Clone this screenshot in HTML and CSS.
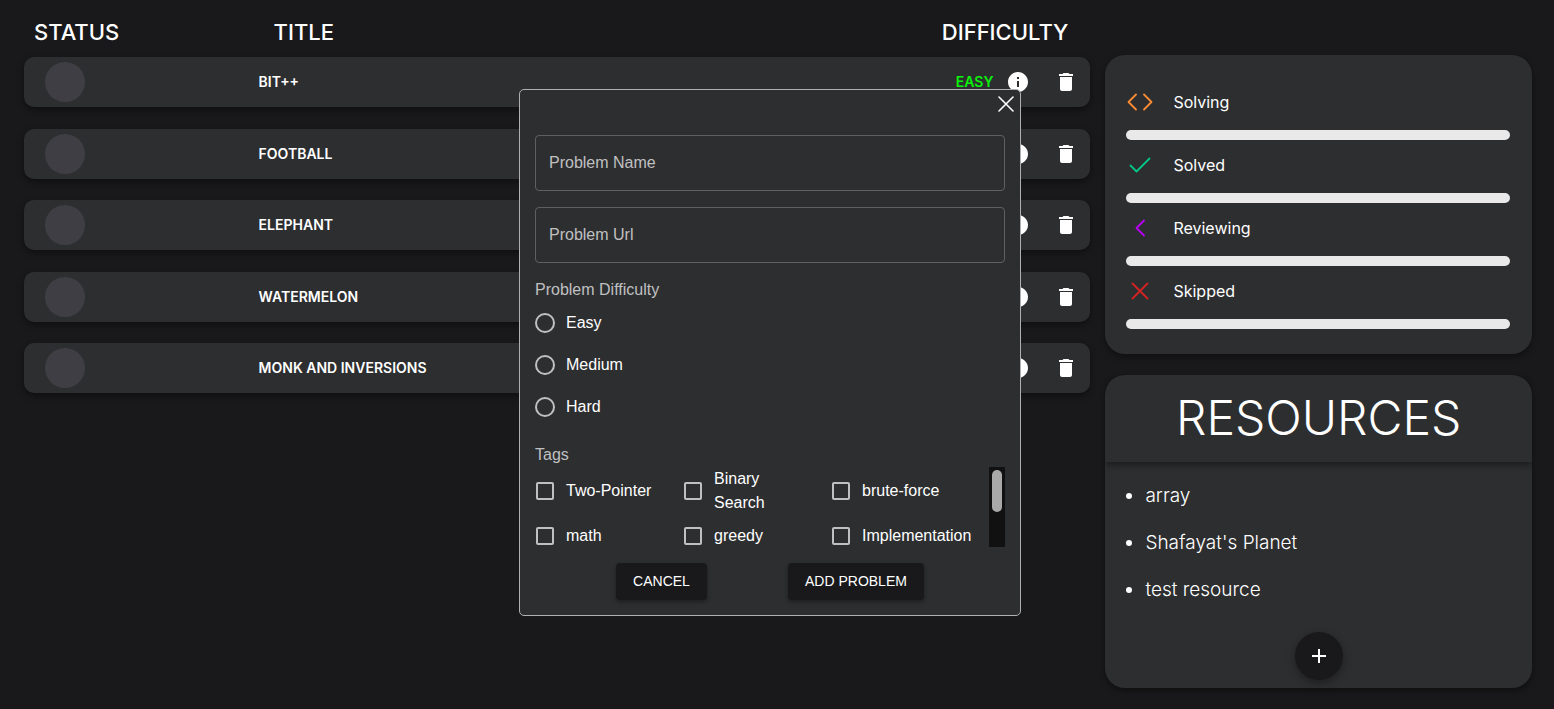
FILE: index.html
```html
<!DOCTYPE html>
<html lang="en">
<head>
<meta charset="utf-8">
<meta name="viewport" content="width=device-width, initial-scale=1">
<title>Problem Tracker</title>
<link rel="stylesheet" href="styles.css">
</head>
<body>
<svg class="sprite" aria-hidden="true">
  <symbol id="info" viewBox="0 0 24 24"><path d="M12 2C6.480 2 2 6.480 2 12s4.480 10 10 10 10-4.480 10-10S17.520 2 12 2zm1 15h-2v-6h2v6zm0-8h-2V7h2v2z"/></symbol>
  <symbol id="trash" viewBox="0 0 24 24"><path d="M6 19c0 1.100.900 2 2 2h8c1.100 0 2-.900 2-2V7H6v12zM19 4h-3.500l-1-1h-5l-1 1H5v2h14V4z"/></symbol>
</svg>

<main class="page">
  <table class="problems">
    <thead>
      <tr class="problems-head">
        <th class="head-status" scope="col">STATUS</th>
        <th class="head-title" scope="col">TITLE</th>
        <th class="head-difficulty" scope="col">DIFFICULTY</th>
      </tr>
    </thead>
    <tbody class="problems-body">
      <tr class="problem">
        <td class="problem-status"><button class="status-dot" aria-label="Set status"></button></td>
        <td>BIT++</td>
        <td class="easy">EASY</td>
        <td class="problem-actions">
          <button class="icon-button" aria-label="Details"><svg class="icon"><use href="#info"/></svg></button>
          <button class="icon-button" aria-label="Delete"><svg class="icon"><use href="#trash"/></svg></button>
        </td>
      </tr>
      <tr class="problem">
        <td class="problem-status"><button class="status-dot" aria-label="Set status"></button></td>
        <td>FOOTBALL</td>
        <td></td>
        <td class="problem-actions">
          <button class="icon-button" aria-label="Details"><svg class="icon"><use href="#info"/></svg></button>
          <button class="icon-button" aria-label="Delete"><svg class="icon"><use href="#trash"/></svg></button>
        </td>
      </tr>
      <tr class="problem">
        <td class="problem-status"><button class="status-dot" aria-label="Set status"></button></td>
        <td>ELEPHANT</td>
        <td></td>
        <td class="problem-actions">
          <button class="icon-button" aria-label="Details"><svg class="icon"><use href="#info"/></svg></button>
          <button class="icon-button" aria-label="Delete"><svg class="icon"><use href="#trash"/></svg></button>
        </td>
      </tr>
      <tr class="problem">
        <td class="problem-status"><button class="status-dot" aria-label="Set status"></button></td>
        <td>WATERMELON</td>
        <td></td>
        <td class="problem-actions">
          <button class="icon-button" aria-label="Details"><svg class="icon"><use href="#info"/></svg></button>
          <button class="icon-button" aria-label="Delete"><svg class="icon"><use href="#trash"/></svg></button>
        </td>
      </tr>
      <tr class="problem">
        <td class="problem-status"><button class="status-dot" aria-label="Set status"></button></td>
        <td>MONK AND INVERSIONS</td>
        <td></td>
        <td class="problem-actions">
          <button class="icon-button" aria-label="Details"><svg class="icon"><use href="#info"/></svg></button>
          <button class="icon-button" aria-label="Delete"><svg class="icon"><use href="#trash"/></svg></button>
        </td>
      </tr>
    </tbody>
  </table>

  <aside class="sidebar">
    <section class="card stats">
      <div class="stat">
        <div class="stat-label">
          <svg class="stat-icon solving" viewBox="0 0 28 20"><path d="M10 2.500 2.500 10l7.500 7.500M18 2.500l7.500 7.500-7.500 7.500"/></svg>
          <span>Solving</span>
        </div>
        <div class="bar"></div>
      </div>
      <div class="stat">
        <div class="stat-label">
          <svg class="stat-icon solved" viewBox="0 0 28 20"><path d="M4.500 10.500l6 6 13-13"/></svg>
          <span>Solved</span>
        </div>
        <div class="bar"></div>
      </div>
      <div class="stat">
        <div class="stat-label">
          <svg class="stat-icon reviewing" viewBox="0 0 28 20"><path d="M18 2.500 10.500 10l7.500 7.500"/></svg>
          <span>Reviewing</span>
        </div>
        <div class="bar"></div>
      </div>
      <div class="stat">
        <div class="stat-label">
          <svg class="stat-icon skipped" viewBox="0 0 28 20"><path d="M6.500 2.500l15 15M21.500 2.500l-15 15"/></svg>
          <span>Skipped</span>
        </div>
        <div class="bar"></div>
      </div>
    </section>

    <section class="card resources">
      <h2 class="resources-title">RESOURCES</h2>
      <ul class="resources-list">
        <li>array</li>
        <li>Shafayat's Planet</li>
        <li>test resource</li>
      </ul>
      <button class="add-button" aria-label="Add resource">
        <svg class="icon" viewBox="0 0 24 24"><path d="M19 13h-6v6h-2v-6H5v-2h6V5h2v6h6v2z"/></svg>
      </button>
    </section>
  </aside>
</main>

<div class="overlay">
  <form class="modal" role="dialog" aria-label="Add problem">
    <button class="close" type="button" aria-label="Close">
      <svg class="close-icon" viewBox="0 0 16 16"><path d="M1 1l14 14M15 1L1 15"/></svg>
    </button>
    <div class="fields">
      <input class="field" type="text" aria-label="Problem Name" placeholder="Problem Name">
      <input class="field" type="text" aria-label="Problem Url" placeholder="Problem Url">
    </div>
    <fieldset class="group">
      <legend class="legend">Problem Difficulty</legend>
      <label class="option"><input class="radio" type="radio" name="difficulty">Easy</label>
      <label class="option"><input class="radio" type="radio" name="difficulty">Medium</label>
      <label class="option"><input class="radio" type="radio" name="difficulty">Hard</label>
    </fieldset>
    <fieldset class="group tags">
      <legend class="legend">Tags</legend>
      <div class="tags-scroll">
        <div class="tags-grid">
          <label class="option"><input class="check" type="checkbox">Two-Pointer</label>
          <label class="option"><input class="check" type="checkbox">Binary Search</label>
          <label class="option"><input class="check" type="checkbox">brute-force</label>
          <label class="option"><input class="check" type="checkbox">math</label>
          <label class="option"><input class="check" type="checkbox">greedy</label>
          <label class="option"><input class="check" type="checkbox">Implementation</label>
        </div>
        <div class="track" aria-hidden="true"><div class="thumb"></div></div>
      </div>
    </fieldset>
    <div class="actions">
      <button class="action" type="button">CANCEL</button>
      <button class="action" type="submit">ADD PROBLEM</button>
    </div>
  </form>
</div>
</body>
</html>
```

FILE: styles.css
```css
* { box-sizing: border-box; }

body {
  margin: 0;
  min-height: 100vh;
  background: #19191b;
  color: #fff;
  font-family: Inter, "Open Sans", sans-serif;
}

button {
  border: 0;
  padding: 0;
  background: none;
  color: inherit;
  font: inherit;
  cursor: pointer;
}

.sprite { display: none; }

.icon {
  display: block;
  width: 24px;
  height: 24px;
  fill: currentColor;
}

.page {
  display: grid;
  grid-template-columns: minmax(0, 5fr) minmax(0, 2fr);
  gap: 15px;
  align-items: start;
  padding: 0 22px 20px 24px;
}

/* Problem list */
.problems { display: block; }
.problems thead { display: block; }

.problems-head {
  display: grid;
  grid-template-columns: 22% 1fr auto;
  padding-top: 15px;
  font-size: 22px;
  line-height: 34px;
}

.problems th, .problems td { padding: 0; }
.problems th { font-weight: 500; text-align: left; }
.problems .head-status { padding-left: 10px; }
.problems .head-title { padding-left: 15px; }
.problems .head-difficulty { padding-right: 22px; }

.problems-body {
  display: flex;
  flex-direction: column;
  justify-content: space-between;
  min-height: 336px;
  margin-top: 8px;
}

.problem {
  display: grid;
  grid-template-columns: 22% 1fr auto auto;
  align-items: center;
  min-height: 50px;
  border-radius: 10px;
  background: #2d2e30;
  box-shadow: 0 3px 6px rgba(0, 0, 0, 0.4);
  font-size: 14px;
  font-weight: 600;
  line-height: 20px;
}

.problems .problem-status { padding-left: 21px; }

.status-dot {
  display: block;
  width: 40px;
  height: 40px;
  border-radius: 50%;
  background: #3e3e44;
}

.easy { color: #0bf20b; }

.problems .problem-actions {
  display: flex;
  gap: 24px;
  padding: 0 12px 0 13px;
}

/* Sidebar */
.sidebar {
  display: flex;
  flex-direction: column;
  gap: 21px;
  padding-top: 55px;
}

.card {
  border-radius: 20px;
  background: #2d2e30;
  box-shadow: 0 3px 6px rgba(0, 0, 0, 0.4);
}

.stats { padding: 22px 22px 25px 21px; }

.stat-label {
  display: flex;
  align-items: center;
  gap: 19px;
  height: 53px;
  padding-bottom: 4px;
  font-size: 16px;
  line-height: 24px;
}

.stat-icon {
  width: 28px;
  height: 20px;
  fill: none;
  stroke-width: 1.8;
  stroke-linecap: round;
  stroke-linejoin: round;
}

.solving { stroke: #fb8c34; }
.solved { stroke: #05c585; }
.reviewing { stroke: #b800f5; }
.skipped { stroke: #d32323; }

.bar {
  height: 10px;
  border-radius: 5px;
  background: #e9e9e9;
}

.resources { padding-bottom: 8px; }

.resources-title {
  margin: 0;
  padding: 7px 0 8px;
  box-shadow: 0 3px 6px rgba(0, 0, 0, 0.4);
  clip-path: inset(0 0 -10px 0);
  border-radius: 20px 20px 0 0;
  font-size: 48px;
  font-weight: 300;
  line-height: 72px;
  text-align: center;
}

.resources-list {
  display: flex;
  flex-direction: column;
  gap: 20px;
  margin: 20px 0 29px;
  padding-left: 40px;
  font-size: 19px;
  font-weight: 300;
  line-height: 27px;
}

.add-button {
  display: grid;
  place-items: center;
  width: 48px;
  height: 48px;
  margin: 0 auto;
  border-radius: 50%;
  background: #19191b;
  box-shadow: 0 3px 8px rgba(0, 0, 0, 0.35);
}

/* Modal */
.overlay {
  position: fixed;
  inset: 0;
  display: grid;
  place-items: center;
  padding: 0 14px 4px 0;
  font-family: "Liberation Sans", Arial, sans-serif;
}

.modal {
  width: 502px;
  max-width: 100%;
  padding: 0 15px 15px;
  border: 1px solid #b0b0b1;
  border-radius: 5px;
  background: #2d2e30;
  font-size: 16px;
  line-height: 24px;
}

.close {
  display: block;
  margin: 0 -9px 0 auto;
  padding: 6px 0;
}

.close-icon {
  display: block;
  width: 16px;
  height: 16px;
  fill: none;
  stroke: #fff;
  stroke-width: 1.6;
  stroke-linecap: round;
}

.fields {
  display: grid;
  gap: 16px;
  margin: 17px 0 15px;
}

.field {
  width: 100%;
  height: 56px;
  padding: 0 13px;
  border: 1px solid #5f6061;
  border-radius: 4px;
  background: transparent;
  color: #fff;
  font: inherit;
}

.field::placeholder { color: #c0c0c1; opacity: 1; }

.group {
  min-width: 0;
  margin: 0;
  padding: 0;
  border: 0;
}

.legend { padding: 0; color: #c0c0c1; }

.option {
  display: flex;
  align-items: center;
  gap: 11px;
  min-height: 42px;
  padding-right: 16px;
}

.radio, .check {
  flex: none;
  appearance: none;
  margin: 0;
  border: 2px solid #c0c0c1;
}

.radio { width: 20px; height: 20px; border-radius: 50%; }

.check {
  width: 18px;
  height: 18px;
  margin: 0 1px;
  border-radius: 2px;
}

.radio:checked, .check:checked { background: #c0c0c1; }

.tags { margin-top: 15px; }
.tags .option { padding-right: 24px; }

.tags-scroll { display: flex; height: 80px; }

.tags-grid {
  flex: 1;
  display: grid;
  grid-template-columns: repeat(3, 148px);
  grid-template-rows: 48px 42px;
  overflow: hidden;
}

.track {
  width: 16px;
  padding: 3px;
  background: #111;
}

.thumb {
  height: 42px;
  border-radius: 5px;
  background: #a9a9a9;
}

.actions {
  display: flex;
  justify-content: space-evenly;
  margin-top: 16px;
}

.action {
  padding: 6px 17px 7px;
  border-radius: 4px;
  background: #19191b;
  box-shadow: 0 2px 4px rgba(0, 0, 0, 0.35);
  font-size: 14px;
  line-height: 24px;
}
```
